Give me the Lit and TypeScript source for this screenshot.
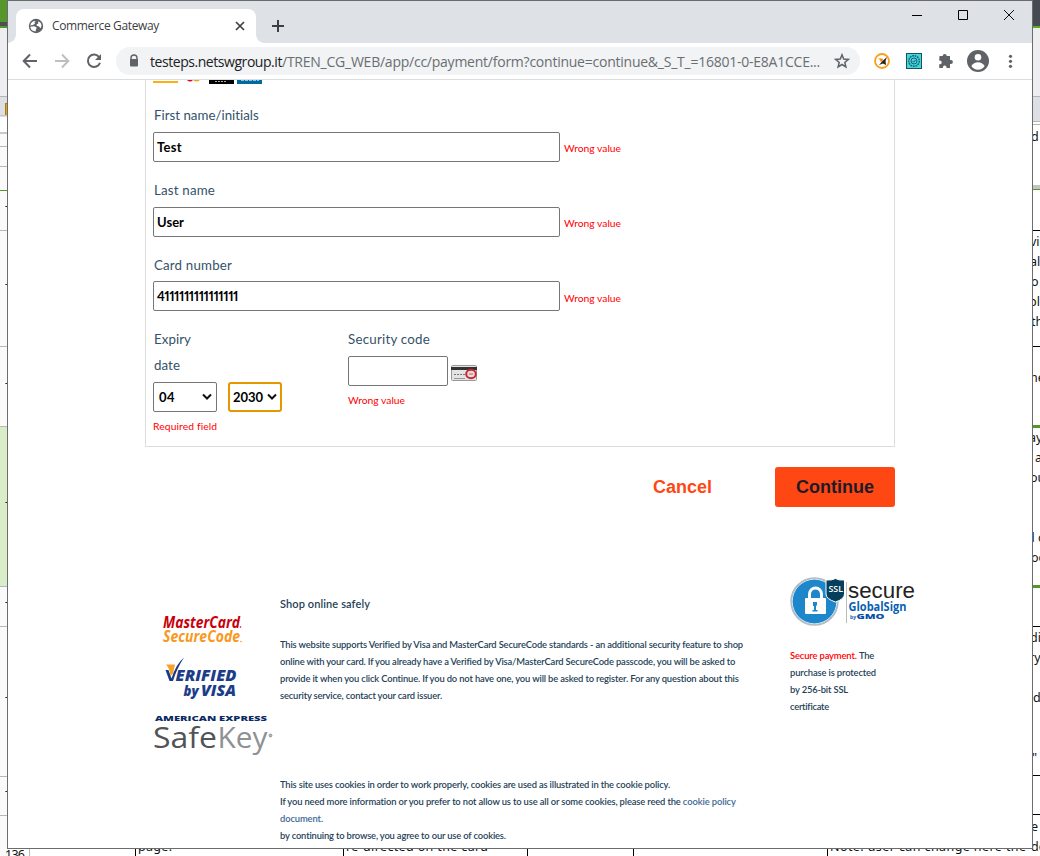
import { LitElement, html, css, svg } from "lit";
import { customElement, property } from "lit/decorators.js";

/** One line of text, letter-spaced so that it fills a given width. */
@customElement("fit-line")
class FitLine extends LitElement {
  @property({ type: Number }) w = 0;
  @property() text = "";
  static styles = css`
    :host { display: inline-block; white-space: pre; }
  `;
  updated() {
    const el = this.renderRoot.querySelector("span") as HTMLElement;
    el.style.letterSpacing = "0px";
    const natural = el.getBoundingClientRect().width;
    el.style.letterSpacing = `${(this.w - natural) / this.text.length}px`;
  }
  render() {
    return html`<span>${this.text}</span>`;
  }
}

const line = (text: string, w: number) => html`<fit-line .text=${text} .w=${w}></fit-line>`;

/** The spreadsheet that lies behind the browser window. */
@customElement("sheet-backdrop")
class SheetBackdrop extends LitElement {
  static styles = css`
    :host { display: block; width: 1040px; height: 856px; }
    svg { display: block; }
    text { font-family: "Noto Sans", sans-serif; font-size: 12.5px; fill: #111; }
  `;
  render() {
    const right: [number, number, string][] = [
      [1031, 141, "d"], [1030, 246, "vi"], [1030, 266, "al"], [1031, 286, "o"], [1029, 306, "pl"], [1031, 326, "th"],
      [1030, 382, "ne"], [1029, 442, "ay"], [1035, 462, "a"], [1030, 482, "ou"], [1027, 542, "d c"], [1031, 562, "oo"],
      [1030, 642, "di"], [1029, 662, "ry"], [1033, 702, "d"], [1032, 762, "\""], [1031, 831, "e"], [1031, 851, "de"],
    ];
    return html`<svg width="1040" height="856" viewBox="0 0 1040 856" shape-rendering="crispEdges">
      <rect width="1040" height="856" fill="#fff" />
      <rect width="8" height="23" fill="#57962b" />
      <rect y="22" width="8" height="4" fill="#4a4e55" />
      <rect y="26" width="8" height="2" fill="#57962b" />
      <rect y="28" width="8" height="68" fill="#eeeef0" />
      <rect y="96" width="8" height="26" fill="#dedfe4" />
      <rect y="96" width="8" height="1" fill="#b4b5bb" />
      <rect x="5" y="103" width="3" height="12" fill="#e8a317" stroke="#b37912" />
      <rect y="115" width="8" height="1" fill="#c4c5ca" />
      <rect y="117" width="8" height="15" fill="#fff" />
      <rect y="132" width="8" height="2" fill="#c9c9c9" />
      <rect y="134" width="8" height="722" fill="#fafafa" />
      <rect y="426" width="8" height="160" fill="#d8edc8" />
      <rect y="162" width="8" height="1" fill="#57962b" opacity="0" />
      ${[146, 166, 190, 230, 346, 426, 586, 626, 776, 815].map(
        (y) => svg`<rect y=${y - 0} width="8" height="1" fill=${y === 190 ? "#57962b" : "#b8b8b8"} />`)}
      ${[207, 285, 384, 503, 603, 698, 792].map(
        (y) => svg`<rect x="5" y=${y - 1} width="1" height="1" fill="#9a7040" /><rect x="6" y=${y - 1} width="2" height="1" fill="#222" />`)}
      <rect x="1033" width="7" height="26" fill="#464b53" />
      <rect x="1033" y="26" width="7" height="2" fill="#5dae22" />
      <rect x="1033" y="28" width="7" height="68" fill="#eeeef0" />
      <rect x="1033" y="96" width="7" height="26" fill="#dedfe4" />
      ${[96, 121, 124].map((y) => svg`<rect x="1033" y=${y} width="7" height="1" fill="#b4b5bb" />`)}
      ${[230, 346, 626, 775, 814].map((y) => svg`<rect x="1033" y=${y} width="7" height="1" fill="#000" />`)}
      <rect x="1033" y="185" width="7" height="4" fill="#c3c3c3" />
      <rect x="1033" y="189" width="7" height="1" fill="#57962b" />
      <rect x="1033" y="425" width="7" height="3" fill="#57962b" />
      <rect x="1033" y="585" width="7" height="3" fill="#57962b" />
      ${right.map(([x, y, t]) => svg`<text x=${x} y=${y}>${t}</text>`)}
      <rect x="29" y="849" width="1" height="7" fill="#b8b8b8" />
      ${[135, 343, 527, 633, 827].map((x) => svg`<rect x=${x} y="848" width="1" height="8" fill="#000" />`)}
      <text x="5" y="859" textLength="20">136</text>
      <text x="138" y="851" textLength="34">page.</text>
      <text x="346" y="851" textLength="142">re-directed on the card</text>
      <text x="830" y="851" textLength="196">Note: user can change here the</text>
    </svg>`;
  }
}

@customElement("browser-chrome")
class BrowserChrome extends LitElement {
  static styles = css`
    :host { display: block; font-family: "Open Sans", "Noto Sans", sans-serif; color: #3c4043; }
    svg { display: block; }
    .strip { height: 42px; background: #dee1e6; display: flex; align-items: flex-end; }
    .tab { position: relative; margin-left: 8px; width: 240px; height: 34px; box-sizing: border-box; background: #fff;
      border-radius: 8px 8px 0 0; display: flex; align-items: center; padding: 0 11px 0 12px; font-size: 12px; }
    .tab::before, .tab::after { content: ""; position: absolute; bottom: 0; width: 8px; height: 8px; }
    .tab::before { left: -8px; background: radial-gradient(circle at 0 0, transparent 7.5px, #fff 8px); }
    .tab::after { right: -8px; background: radial-gradient(circle at 100% 0, transparent 7.5px, #fff 8px); }
    .title { margin-left: 8px; flex: 1; position: relative; top: -1px; }
    .plus { margin: 0 0 11px 16px; }
    .controls { margin-left: auto; align-self: flex-start; display: flex; gap: 34px; padding: 8px 17px 0 0; }
    .bar { height: 36px; display: flex; align-items: center; border-bottom: 1px solid #dadce0; padding-left: 14px; }
    .nav { display: flex; gap: 16px; }
    .url { margin-left: 14px; width: 744px; height: 28px; border-radius: 14px; background: #f1f3f4; display: flex;
      align-items: center; box-sizing: border-box; padding: 0 10px 0 12px; font-size: 14px; color: #6a6e73; }
    .host { color: #202124; margin-left: 10px; }
    .star { margin-left: auto; }
    .ext { display: flex; align-items: center; margin-left: 14px; }
  `;
  render() {
    return html`
      <div class="strip">
        <div class="tab">
          <svg width="16" height="16" viewBox="0 0 16 16"><circle cx="8" cy="8" r="7.2" fill="#5f6368" />
            <path d="M7.800 3 6.500 4.200 7 5.600 5 7 2.300 7.500C2.600 5 4.500 2.800 7.800 3ZM2.300 8.700 6.400 8.300 8.800 9.700 8 11.200 7.600 13.500 5 12.800C3.500 12 2.500 10.700 2.300 8.700ZM10 3.200 12.600 4.800 13.600 7.400 12.700 10.300 11 8.400 8.800 7.800 8.500 6.500 10.300 5.500Z" fill="#fff" /></svg>
          <span class="title">${line("Commerce Gateway", 107)}</span>
          <svg width="10" height="10" viewBox="0 0 10 10"><path d="m1 1 8 8M9 1 1 9" stroke="#3c4043" stroke-width="1.7" /></svg>
        </div>
        <svg class="plus" width="12" height="12" viewBox="0 0 12 12"><path d="M6 0v12M0 6h12" stroke="#3c4043" stroke-width="2" /></svg>
        <div class="controls">
          <svg width="12" height="12" viewBox="0 0 12 12"><path d="M1 6.5h10" stroke="#000" /></svg>
          <svg width="12" height="12" viewBox="0 0 12 12"><path d="M1.5 1.5h9v9h-9z" fill="none" stroke="#000" /></svg>
          <svg width="12" height="12" viewBox="0 0 12 12"><path d="m1 1 10 10M11 1 1 11" stroke="#111" /></svg>
        </div>
      </div>
      <div class="bar">
        <div class="nav">
          <svg width="16" height="16" viewBox="0 0 16 16"><path d="M15 8H2M8 1.5 1.7 8 8 14.5" fill="none" stroke="#5f6368" stroke-width="2" /></svg>
          <svg width="16" height="16" viewBox="0 0 16 16"><path d="M1 8h13M8 1.5 14.3 8 8 14.5" fill="none" stroke="#bdbfc2" stroke-width="2" /></svg>
          <svg width="16" height="16" viewBox="0 0 16 16"><path d="M13.2 4.2A6.2 6.2 0 1 0 14 9.7" fill="none" stroke="#5f6368" stroke-width="2" /><path d="M15 1v6H9z" fill="#5f6368" /></svg>
        </div>
        <div class="url">
          <svg width="12" height="14" viewBox="0 0 12 14"><path d="M3 6V4a3 3 0 0 1 6 0v2" fill="none" stroke="#5f6368" stroke-width="1.4" /><rect x="2" y="5" width="8" height="7.5" rx="1" fill="#5f6368" /></svg>
          <span class="host">${line("testeps.netswgroup.it", 132)}</span>${line("/TREN_CG_WEB/app/cc/payment/form?continue=continue&_S_T_=16801-0-E8A1CCE...", 538)}
          <svg class="star" width="16" height="16" viewBox="0 0 16 16"><path d="m8 1.800 1.700 4.300 4.600.3-3.500 3 1.100 4.500L8 11.500l-3.900 2.400 1.100-4.500-3.500-3 4.600-.3z" fill="none" stroke="#5f6368" stroke-width="1.500" /></svg>
        </div>
        <div class="ext">
          <svg width="150" height="24" viewBox="874 49 150 24">
            <circle cx="882" cy="61" r="7" fill="#fff" stroke="#f9a01b" stroke-width="1.800" />
            <path d="M878 58.500h4.500l.5 1.500-2 2.500-1-2.500z" fill="#f28c00" /><path d="m887 57-4 3.500-4 4.500 4-1.500 3 1.500-.5-4z" fill="#222" />
            <rect x="906.500" y="53.500" width="15" height="15" fill="#45d5df" stroke="#17535d" />
            <circle cx="914" cy="61" r="5.300" fill="none" stroke="#17626d" stroke-width="1.400" stroke-dasharray="1.800 .7" />
            <circle cx="914" cy="61" r="3" fill="none" stroke="#17626d" /><path d="m912.500 61 1.200 1.200 2-2.400" fill="none" stroke="#17626d" />
            <path d="M939.500 56h3.200a2 2 0 0 1 4 0h3.300v3.900h.9a2 2 0 0 1 0 4h-.9v4h-3.500v-.7a1.800 1.800 0 0 0-3.600 0v.7h-3.700v-3.600h.6a1.900 1.900 0 0 0 0-3.800h-.6z" fill="#5f6368" />
            <circle cx="978" cy="61" r="11" fill="#5f6368" /><circle cx="978" cy="57.300" r="3.300" fill="#fff" />
            <path d="M971.300 66a8 8 0 0 1 13.400 0 8 8 0 0 1-13.400 0z" fill="#fff" />
            <g fill="#5f6368"><circle cx="1010.500" cy="56.300" r="1.600" /><circle cx="1010.500" cy="61.300" r="1.600" /><circle cx="1010.500" cy="66.300" r="1.600" /></g>
          </svg>
        </div>
      </div>`;
  }
}

@customElement("payment-form")
class PaymentForm extends LitElement {
  static styles = css`
    :host { display: block; width: 750px; margin-left: 137px; font-family: Lato, sans-serif; }
    svg { display: block; }
    .box { box-sizing: border-box; height: 367px; border: 1px solid #ddd; border-top: 0; padding-left: 7px; color: #34526a; font-size: 13.3px; }
    .cards { height: 23px; }
    .label { height: 26px; line-height: 24px; padding-left: 1px; }
    .row { display: flex; align-items: center; gap: 4px; height: 30px; margin: 3px 0 16px; }
    .row.third { margin: 2px 0 0; }
    .row.third .err { padding-top: 4px; }
    .input { box-sizing: border-box; width: 407px; height: 30px; border: 1px solid #767676; border-radius: 2px; padding: 0 4px 0 3px;
      display: flex; align-items: center; color: #000; font-weight: 700; font-size: 13px; background: #fff;
      font-feature-settings: "pnum"; }
    .err { color: #f00; font-size: 10.3px; line-height: 14px; padding-top: 2px; }
    .split { display: grid; grid-template-columns: 195px 1fr; padding-top: 16px; }
    .selects { display: flex; gap: 11px; margin-top: 3px; }
    .select { width: 64px; justify-content: space-between; padding: 0 4px 0 5px; font-feature-settings: normal; }
    .focus { width: 54px; border: 2px solid #e59700; border-radius: 3px; padding: 0 3px; }
    .code { display: flex; gap: 3px; margin-top: 3px; align-items: flex-start; }
    .code .input { width: 100px; }
    .code svg { margin-top: 9px; }
    .under { padding: 7px 0 0 0; }
    .right .label { padding-left: 0; }
    .actions { display: flex; justify-content: flex-end; align-items: center; gap: 63px; margin-top: 20px;
      font: bold 18px "Liberation Sans", Arial, sans-serif; color: #ff4713; }
    .button { width: 120px; height: 40px; border-radius: 3px; background: #ff4713; color: #1c1c28; display: flex; align-items: center; justify-content: center; }
  `;
  render() {
    const wrong = html`<span class="err">${line("Wrong value", 57)}</span>`;
    const chevron = html`<svg width="10" height="8" viewBox="0 0 10 8"><path d="m1 1.500 4 4 4-4" fill="none" stroke="#111" stroke-width="2" /></svg>`;
    return html`
      <div class="box">
        <svg class="cards" width="120" height="23" viewBox="153 80 120 23">
          <rect x="153" y="81" width="25" height="2" fill="#fbb114" />
          <path d="M187 80h6q-3 3-6 0z" fill="#e6002d" /><path d="M193 80h7q-3.500 3-7 0z" fill="#f9a01b" />
          <rect x="209" y="80" width="25" height="4" fill="#000" /><path d="M215 81.500h12" stroke="#aaa" stroke-dasharray="2 1" />
          <rect x="237" y="80" width="25" height="4" fill="#006a9e" /><path d="M241 80.500h18" stroke="#8fc2dc" stroke-dasharray="3 1" />
        </svg>
        <div class="label">${line("First name/initials", 105)}</div>
        <div class="row"><div class="input">${line("Test", 25)}</div>${wrong}</div>
        <div class="label">${line("Last name", 61)}</div>
        <div class="row"><div class="input">${line("User", 27)}</div>${wrong}</div>
        <div class="label">${line("Card number", 78)}</div>
        <div class="row third"><div class="input">${line("4111111111111111", 81)}</div>${wrong}</div>
        <div class="split">
          <div>
            <div class="label">${line("Expiry", 37)}</div>
            <div class="label">${line("date", 26)}</div>
            <div class="selects">
              <div class="input select">${line("04", 16)}${chevron}</div>
              <div class="input select focus">${line("2030", 30)}${chevron}</div>
            </div>
            <div class="err under">${line("Required field", 64)}</div>
          </div>
          <div class="right">
            <div class="label">${line("Security code", 82)}</div>
            <div class="code">
              <div class="input"></div>
              <svg width="27" height="16" viewBox="0 0 27 16">
                <rect x=".5" y=".5" width="25" height="15" rx="1" fill="#e4e4e4" stroke="#999" /><rect y="2" width="26" height="3" fill="#333" />
                <path d="M3 9.500h12" stroke="#777" stroke-dasharray="2 1" /><path d="M3 13.500h11" stroke="#999" />
                <ellipse cx="20" cy="9" rx="4.800" ry="4.200" fill="#eadada" stroke="#c52733" stroke-width="2" /><path d="M18 9h4" stroke="#a66" />
              </svg>
            </div>
            <div class="err under">${line("Wrong value", 57)}</div>
          </div>
        </div>
      </div>
      <div class="actions">${line("Cancel", 59)}<div class="button">${line("Continue", 78)}</div></div>`;
  }
}

@customElement("site-footer")
class SiteFooter extends LitElement {
  static styles = css`
    :host { display: grid; grid-template-columns: 127px 510px 150px; margin: 68px 0 0 145px;
      font: 600 9.4px/17px Lato, sans-serif; color: #263f58; }
    svg { display: block; }
    .logos { padding-top: 34px; }
    .title { font-size: 11px; margin-top: 20px; }
    .para { margin-top: 24px; }
    .cookies { margin-top: 72px; }
    .para div, .cookies div { height: 17px; }
    .link { color: #3d6893; }
    .seal div { height: 17px; }
    .seal .first { margin-top: 20px; }
    .red { color: #f00; }
  `;
  render() {
    return html`
      <svg class="logos" width="127" height="150" viewBox="153 609 127 150">
        <g font-family="Open Sans, sans-serif" font-weight="700" font-style="italic">
          <text x="163" y="627.500" font-size="16" fill="#c9000b" textLength="77" lengthAdjust="spacingAndGlyphs">MasterCard</text>
          <text x="163" y="642" font-size="16" fill="#f8991d" textLength="77" lengthAdjust="spacingAndGlyphs">SecureCode</text>
        </g>
        <circle cx="240.500" cy="627" r=".8" fill="#c9000b" /><circle cx="241" cy="641.500" r=".8" fill="#f8991d" />
        <path d="M166 664.500h9l-2 9-2.500 2.500q-.5-7-4.500-11.500z" fill="#f8a12a" />
        <path d="M165.500 670h3l3 8.500Q176 664 184 657.500 177 668 173 681h-3.500z" fill="#183a86" />
        <g font-family="Open Sans, sans-serif" font-weight="800" font-style="italic" fill="#1c3d88">
          <text x="175.500" y="681" font-size="15.500" textLength="61" lengthAdjust="spacingAndGlyphs">ERIFIED</text>
          <text x="183.500" y="695.500" font-size="14" textLength="15" lengthAdjust="spacingAndGlyphs">by</text>
          <text x="201" y="695.500" font-size="15.500" textLength="35" lengthAdjust="spacingAndGlyphs">VISA</text>
        </g>
        <text x="155" y="721.200" font-family="Open Sans, sans-serif" font-weight="800" font-size="7.600" fill="#0b2b64" textLength="112" lengthAdjust="spacingAndGlyphs">AMERICAN EXPRESS</text>
        <text x="153" y="748" font-family="Open Sans, sans-serif" font-weight="500" font-size="29" fill="#515356" textLength="64" lengthAdjust="spacingAndGlyphs">Safe</text>
        <text x="217.500" y="748" font-family="Open Sans, sans-serif" font-weight="400" font-size="29" fill="#8f9194" textLength="50" lengthAdjust="spacingAndGlyphs">Key</text>
        <circle cx="270.500" cy="735.500" r="1.400" fill="#bbb" stroke="#8f9194" />
      </svg>
      <div>
        <div class="title">${line("Shop online safely", 90)}</div>
        <div class="para">
          <div>${line("This website supports Verified by Visa and MasterCard SecureCode standards - an additional security feature to shop", 463)}</div>
          <div>${line("online with your card. If you already have a Verified by Visa/MasterCard SecureCode passcode, you will be asked to", 455)}</div>
          <div>${line("provide it when you click Continue. If you do not have one, you will be asked to register. For any question about this", 459)}</div>
          <div>${line("security service, contact your card issuer.", 162)}</div>
        </div>
        <div class="cookies">
          <div>${line("This site uses cookies in order to work properly, cookies are used as illustrated in the cookie policy.", 390)}</div>
          <div>${line("If you need more information or you prefer to not allow us to use all or some cookies, please reed the ", 403)}<span class="link">${line("cookie policy", 53)}</span></div>
          <div class="link">${line("document.", 43)}</div>
          <div>${line("by continuing to browse, you agree to our use of cookies.", 226)}</div>
        </div>
      </div>
      <div class="seal">
        <svg width="130" height="52" viewBox="790 575 130 52">
          <circle cx="814.500" cy="601.500" r="23.500" fill="#1e87cc" stroke="#b8bcc0" stroke-width="1.500" />
          <circle cx="814.500" cy="601.500" r="22.300" fill="none" stroke="#fff" stroke-width=".8" />
          <path d="M809.500 600v-6a6 6 0 0 1 12 0v6" fill="none" stroke="#fff" stroke-width="3" />
          <rect x="805" y="598" width="21" height="16" rx="1" fill="#fff" />
          <path d="M813 602h4v3l-1 1v4h1.500v1.500h-5V610h1.500v-4h-1z" fill="#1e87cc" />
          <path d="M826 580q6 .5 9.500-1.500 3 2 9 1.500v14q0 5-9 8-9.500-3-9.500-8z" fill="#063f5c" stroke="#fff" stroke-width="1" />
          <text x="828.500" y="592.300" font-family="Open Sans, sans-serif" font-weight="600" font-size="9.500" fill="#fff" textLength="14.500" lengthAdjust="spacingAndGlyphs">SSL</text>
          <path d="M846.500 582v41" stroke="#bbb" />
          <text x="848" y="597.500" font-family="Liberation Sans, sans-serif" font-weight="400" font-size="22" fill="#222" textLength="67" lengthAdjust="spacingAndGlyphs">secure</text>
          <text x="848.500" y="610.500" font-family="Open Sans, sans-serif" font-weight="700" font-size="11.500" fill="#0a5fb0" textLength="58" lengthAdjust="spacingAndGlyphs">GlobalSign</text>
          <text x="850" y="619" font-family="Open Sans, sans-serif" font-weight="700" font-size="6" fill="#0a5fb0" textLength="6" lengthAdjust="spacingAndGlyphs">by</text>
          <text x="856.500" y="619" font-family="Open Sans, sans-serif" font-weight="800" font-size="7.500" fill="#0a4fa8" textLength="28" lengthAdjust="spacingAndGlyphs">GMO</text>
        </svg>
        <div class="first"><span class="red">${line("Secure payment. ", 69)}</span>${line("The", 15)}</div>
        <div>${line("purchase is protected", 86)}</div>
        <div>${line("by 256-bit SSL", 58)}</div>
        <div>${line("certificate", 39)}</div>
      </div>`;
  }
}

@customElement("app-root")
class AppRoot extends LitElement {
  static styles = css`
    :host { display: block; position: relative; width: 1040px; height: 856px; overflow: hidden; }
    .window { position: absolute; left: 7px; top: 0; width: 1026px; height: 849px; box-sizing: border-box;
      border: 1px solid #6b6c6e; background: #fff; overflow: hidden; }
  `;
  render() {
    return html`
      <sheet-backdrop></sheet-backdrop>
      <div class="window">
        <browser-chrome></browser-chrome>
        <payment-form></payment-form>
        <site-footer></site-footer>
      </div>`;
  }
}
